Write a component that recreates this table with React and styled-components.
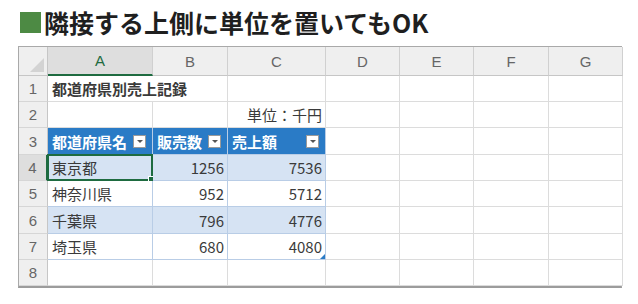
import React from 'react';
import styled, { createGlobalStyle } from 'styled-components';

const Global = createGlobalStyle`
  body {
    margin: 0;
    background: #fff;
    font-family: "Noto Sans CJK JP", "Noto Sans", sans-serif;
  }
`;

const Page = styled.div`
  width: 638px;
  height: 304px;
  padding: 6px 0 0 18px;
  box-sizing: border-box;
`;

const Title = styled.h1`
  display: flex;
  align-items: center;
  gap: 3px;
  margin: 0 0 8px 2px;
  font-size: 25px;
  line-height: 32px;
  font-weight: 700;
  color: #1f1f1f;
`;

const Mark = styled.span`
  width: 21px;
  height: 21px;
  background: #4d8a44;
`;

const Sheet = styled.div`
  display: grid;
  grid-template-columns: 29px 105px 75px 98px 74px 74px 75px 74px;
  grid-template-rows: 29px 26px 26px 27px 26px 26px 27px 26px 26px;
  width: 604px;
  border: 1px solid #a9a9a9;
  border-bottom: 2px solid #9c9c9c;
  box-sizing: border-box;
  font-size: 15px;
  color: #3a3a3a;
`;

const Cell = styled.div`
  position: relative;
  display: flex;
  align-items: center;
  justify-content: ${p => p.$align === 'right' ? 'flex-end' : p.$align === 'center' ? 'center' : 'space-between'};
  grid-column: ${p => p.$span ? `span ${p.$span}` : 'auto'};
  padding: 0 ${p => p.$align === 'right' ? '3px' : '4px'} 0 4px;
  box-sizing: border-box;
  border-right: 1px solid ${p => p.$band !== undefined ? '#b9cde6' : '#dcdcdc'};
  border-bottom: 1px solid ${p => p.$band !== undefined ? '#b9cde6' : '#dcdcdc'};
  background: ${p => p.$band === 'head' ? '#2a7bc6' : p.$band === 'on' ? '#d6e3f3' : '#fff'};
  color: ${p => p.$band === 'head' ? '#fff' : '#3a3a3a'};
  font-weight: ${p => p.$bold ? 700 : 400};
  white-space: nowrap;
`;

const ColHead = styled.div`
  display: flex;
  align-items: center;
  justify-content: center;
  background: ${p => p.$active ? '#dedede' : '#efefef'};
  border-right: 1px solid #d0d0d0;
  border-bottom: ${p => p.$active ? '2px solid #1e6b40' : '1px solid #c6c6c6'};
  color: ${p => p.$active ? '#1e6b40' : '#666'};
  font-family: "Liberation Sans", Arial, sans-serif;
  font-size: 15px;
  box-sizing: border-box;
`;

const RowHead = styled.div`
  display: flex;
  align-items: center;
  justify-content: center;
  background: ${p => p.$active ? '#dedede' : '#efefef'};
  border-right: ${p => p.$active ? '2px solid #1e6b40' : '1px solid #c6c6c6'};
  border-bottom: 1px solid #d6d6d6;
  color: #666;
  font-family: "Liberation Sans", Arial, sans-serif;
  font-size: 15px;
  box-sizing: border-box;
`;

const Corner = styled.div`
  position: relative;
  background: #efefef;
  border-right: 1px solid #c6c6c6;
  border-bottom: 1px solid #c6c6c6;
  &::after {
    content: '';
    position: absolute;
    right: 3px;
    bottom: 3px;
    border-left: 14px solid transparent;
    border-bottom: 14px solid #d3d3d3;
  }
`;

const Filter = styled.span`
  display: flex;
  align-items: center;
  justify-content: center;
  width: 13px;
  height: 13px;
  margin-right: 2px;
  background: #fff;
  border: 1px solid #9a9a9a;
  box-sizing: border-box;
  &::before {
    content: '';
    border-left: 3px solid transparent;
    border-right: 3px solid transparent;
    border-top: 3px solid #555;
  }
`;

const Selection = styled.span`
  position: absolute;
  inset: -1px -1px -1px -1px;
  border: 2px solid #1e6b40;
  pointer-events: none;
  &::after {
    content: '';
    position: absolute;
    right: -4px;
    bottom: -4px;
    width: 5px;
    height: 5px;
    background: #1e6b40;
    border: 1px solid #fff;
  }
`;

const Resize = styled.span`
  position: absolute;
  right: 0;
  bottom: 0;
  border-left: 5px solid transparent;
  border-bottom: 5px solid #2a7bc6;
`;

const cols = ['A', 'B', 'C', 'D', 'E', 'F', 'G'];

const data = [
  ['東京都', '1256', '7536'],
  ['神奈川県', '952', '5712'],
  ['千葉県', '796', '4776'],
  ['埼玉県', '680', '4080'],
];

const Blanks = ({ n }) => Array.from({ length: n }, (_, i) => <Cell key={i} />);

export default function App() {
  return (
    <Page>
      <Global />
      <Title><Mark />隣接する上側に単位を置いてもOK</Title>
      <Sheet>
        <Corner />
        {cols.map(c => <ColHead key={c} $active={c === 'A'}>{c}</ColHead>)}

        <RowHead>1</RowHead>
        <Cell $bold $span={2}>都道府県別売上記録</Cell>
        <Blanks n={5} />

        <RowHead>2</RowHead>
        <Cell />
        <Cell />
        <Cell $align="right">単位：千円</Cell>
        <Blanks n={4} />

        <RowHead>3</RowHead>
        <Cell $band="head" $bold>都道府県名<Filter /></Cell>
        <Cell $band="head" $bold>販売数<Filter /></Cell>
        <Cell $band="head" $bold>売上額<Filter /></Cell>
        <Blanks n={4} />

        {data.map((r, i) => {
          const band = i % 2 === 0 ? 'on' : 'off';
          return (
            <React.Fragment key={r[0]}>
              <RowHead $active={i === 0}>{i + 4}</RowHead>
              <Cell $band={band}>{r[0]}{i === 0 && <Selection />}</Cell>
              <Cell $band={band} $align="right">{r[1]}</Cell>
              <Cell $band={band} $align="right">{r[2]}{i === 3 && <Resize />}</Cell>
              <Blanks n={4} />
            </React.Fragment>
          );
        })}

        <RowHead>8</RowHead>
        <Blanks n={7} />
      </Sheet>
    </Page>
  );
}
